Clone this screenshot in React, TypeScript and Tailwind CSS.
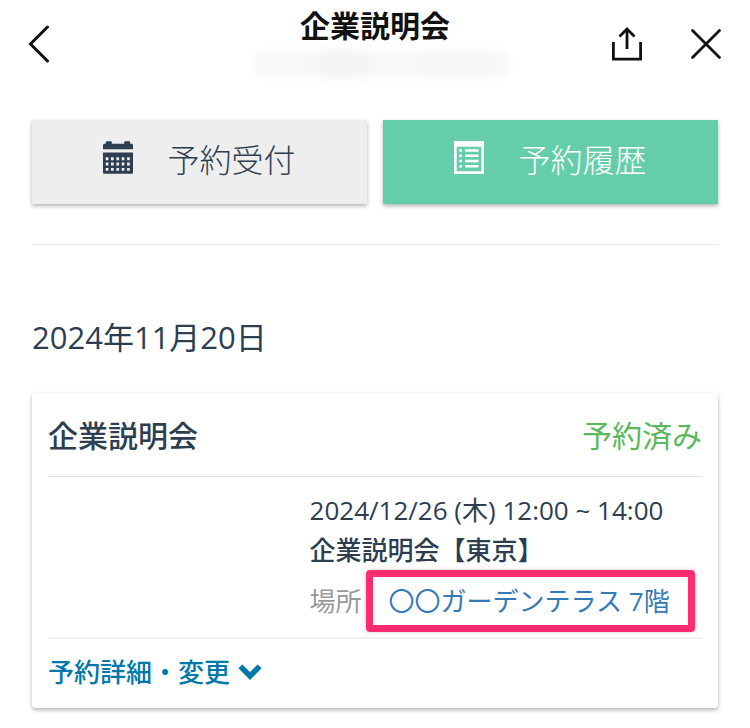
import { useState } from 'react';

const reservations = [
  {
    id: 1,
    bookedOn: '2024年11月20日',
    title: '企業説明会',
    status: '予約済み',
    time: '2024/12/26 (木) 12:00 ~ 14:00',
    name: '企業説明会【東京】',
    place: '〇〇ガーデンテラス 7階',
  },
];

function BackIcon() {
  return (
    <svg width="22" height="38" viewBox="0 0 22 38" fill="none" stroke="currentColor" strokeWidth="3" strokeLinecap="round">
      <path d="M19.5 2 2.5 19 19.5 36" />
    </svg>
  );
}

function ShareIcon() {
  return (
    <svg width="30" height="34" viewBox="0 0 30 34" fill="none" stroke="currentColor" strokeWidth="2.8">
      <path d="M1.4 15v17.2h27.2V15" />
      <path d="M15 22V2" />
      <path d="M7.5 9.5 15 2l7.5 7.5" />
    </svg>
  );
}

function CloseIcon() {
  return (
    <svg width="32" height="32" viewBox="0 0 32 32" fill="none" stroke="currentColor" strokeWidth="2.8" strokeLinecap="round">
      <path d="M2.5 2.5 29.5 29.5M29.5 2.5 2.5 29.5" />
    </svg>
  );
}

function CalendarIcon() {
  return (
    <svg width="30" height="33" viewBox="0 0 30 33" fill="currentColor" className="mb-1.5">
      <path d="M0 8.3V4.4c0-1 .6-1.6 1.6-1.6h1.2V1.4C2.8.6 3.4.2 4.2.2h3.2c.8 0 1.4.4 1.4 1.2v1.4h12.4V1.4c0-.8.6-1.2 1.4-1.2h3.2c.8 0 1.4.4 1.4 1.2v1.4h1.2c1 0 1.6.6 1.6 1.6v3.9z" />
      <path
        fillRule="evenodd"
        d="M0 11.5h30v19.9c0 .8-.5 1.3-1.3 1.3H1.3C.5 32.7 0 32.2 0 31.4zM2.7 16.3v2.9h2.7v-2.9zM8 16.3v2.9h2.7v-2.9zM13.4 16.3v2.9h2.7v-2.9zM18.7 16.3v2.9h2.7v-2.9zM24.1 16.3v2.9h2.7v-2.9zM2.7 21.6v2.9h2.7v-2.9zM8 21.6v2.9h2.7v-2.9zM13.4 21.6v2.9h2.7v-2.9zM18.7 21.6v2.9h2.7v-2.9zM24.1 21.6v2.9h2.7v-2.9zM2.7 26.9v2.9h2.7v-2.9zM8 26.9v2.9h2.7v-2.9zM13.4 26.9v2.9h2.7v-2.9zM18.7 26.9v2.9h2.7v-2.9zM24.1 26.9v2.9h2.7v-2.9z"
      />
    </svg>
  );
}

function ListIcon() {
  return (
    <svg width="30" height="33" viewBox="0 0 30 33" fill="currentColor" className="mb-1.5">
      <path fillRule="evenodd" d="M0 0h30v33H0zM2.7 5.7v24.5h24.6V5.7z" />
      <path d="M5.3 8.2h2.6v2.6H5.3zM5.3 13.4h2.6V16H5.3zM5.3 18.7h2.6v2.6H5.3zM5.3 24h2.6v2.6H5.3z" />
      <path d="M11 8.2h13.5v2.6H11zM11 13.4h13.5V16H11zM11 18.7h13.5v2.6H11zM11 24h13.5v2.6H11z" />
    </svg>
  );
}

function ChevronIcon({ open }: { open: boolean }) {
  return (
    <svg width="24" height="17" viewBox="0 0 24 17" fill="currentColor" className={open ? 'rotate-180' : ''}>
      <path d="M4.3.4 12 8 19.7.4 23.6 4.3 12 16 .4 4.3z" />
    </svg>
  );
}

export default function App() {
  const [tab, setTab] = useState<'reserve' | 'history'>('history');
  const [openId, setOpenId] = useState<number | null>(null);

  const tabClass = (active: boolean) =>
    `flex-1 flex items-center justify-center gap-[34px] h-21 pb-1 text-[32px] font-light shadow-[0_2px_4px_rgba(0,0,0,0.3)] ${
      active ? 'bg-[#66cdaa] text-white' : 'bg-[#eeeeee] text-[#2c3e50]'
    }`;

  return (
    <div className="min-h-screen bg-white text-[#2c3e50] font-['Open_Sans','Noto_Sans_CJK_JP',sans-serif]">
      <header className="grid grid-cols-[1fr_auto_1fr] items-center h-22 px-7 text-[#111111]">
        <button aria-label="戻る" className="justify-self-start">
          <BackIcon />
        </button>
        <div className="flex flex-col items-center pb-1">
          <h1 className="text-[30px] leading-9 font-bold">企業説明会</h1>
          <div className="flex w-64 h-6 mt-2 ml-3 bg-[#f8f8f8] blur-[4px]">
            <div className="w-1/5 ml-16 bg-[#f2f2f2] blur-[6px]" />
            <div className="w-1/4 ml-14 bg-[#f4f4f4] blur-[6px]" />
          </div>
        </div>
        <div className="flex items-center justify-self-end gap-12">
          <button aria-label="共有">
            <ShareIcon />
          </button>
          <button aria-label="閉じる">
            <CloseIcon />
          </button>
        </div>
      </header>

      <main className="px-8 pt-8 pb-5">
        <div className="flex gap-4">
          <button onClick={() => setTab('reserve')} className={tabClass(tab === 'reserve')}>
            <CalendarIcon />
            予約受付
          </button>
          <button onClick={() => setTab('history')} className={tabClass(tab === 'history')}>
            <ListIcon />
            予約履歴
          </button>
        </div>

        <hr className="mt-10 border-[#e8e8e8]" />

        {reservations.map((r) => (
          <section key={r.id} className="mt-17">
            <h2 className="text-[31px] leading-12">{r.bookedOn}</h2>

            <div className="mt-8 px-4 rounded-sm bg-white shadow-[0_2px_4px_rgba(0,0,0,0.3)]">
              <div className="flex items-center justify-between pt-[19px] pb-4 text-[30px] leading-12 border-b border-[#e0e0e0]">
                <h3 className="font-medium">{r.title}</h3>
                <span className="text-[#5cb85c]">{r.status}</span>
              </div>

              <div className="pl-[40%] pt-[13px] pb-[5px] text-[26px] leading-10 whitespace-nowrap border-b-2 border-[#eef0f1]">
                <p>{r.time}</p>
                <p className="font-medium">{r.name}</p>
                <div className="flex items-center gap-1">
                  <span className="text-[#999999]">場所</span>
                  <a
                    href="#place"
                    className="py-1 pl-4 pr-[18px] rounded-sm border-7 border-[#ff2d6f] text-[#337ab7] shadow-[0_0_4px_rgba(0,0,0,0.2)]"
                  >
                    {r.place}
                  </a>
                </div>
              </div>

              <button
                onClick={() => setOpenId(openId === r.id ? null : r.id)}
                className="flex items-center gap-2 pt-[13px] pb-4 text-[26px] leading-10 font-medium text-[#0078aa]"
              >
                予約詳細・変更
                <ChevronIcon open={openId === r.id} />
              </button>
            </div>
          </section>
        ))}
      </main>
    </div>
  );
}
